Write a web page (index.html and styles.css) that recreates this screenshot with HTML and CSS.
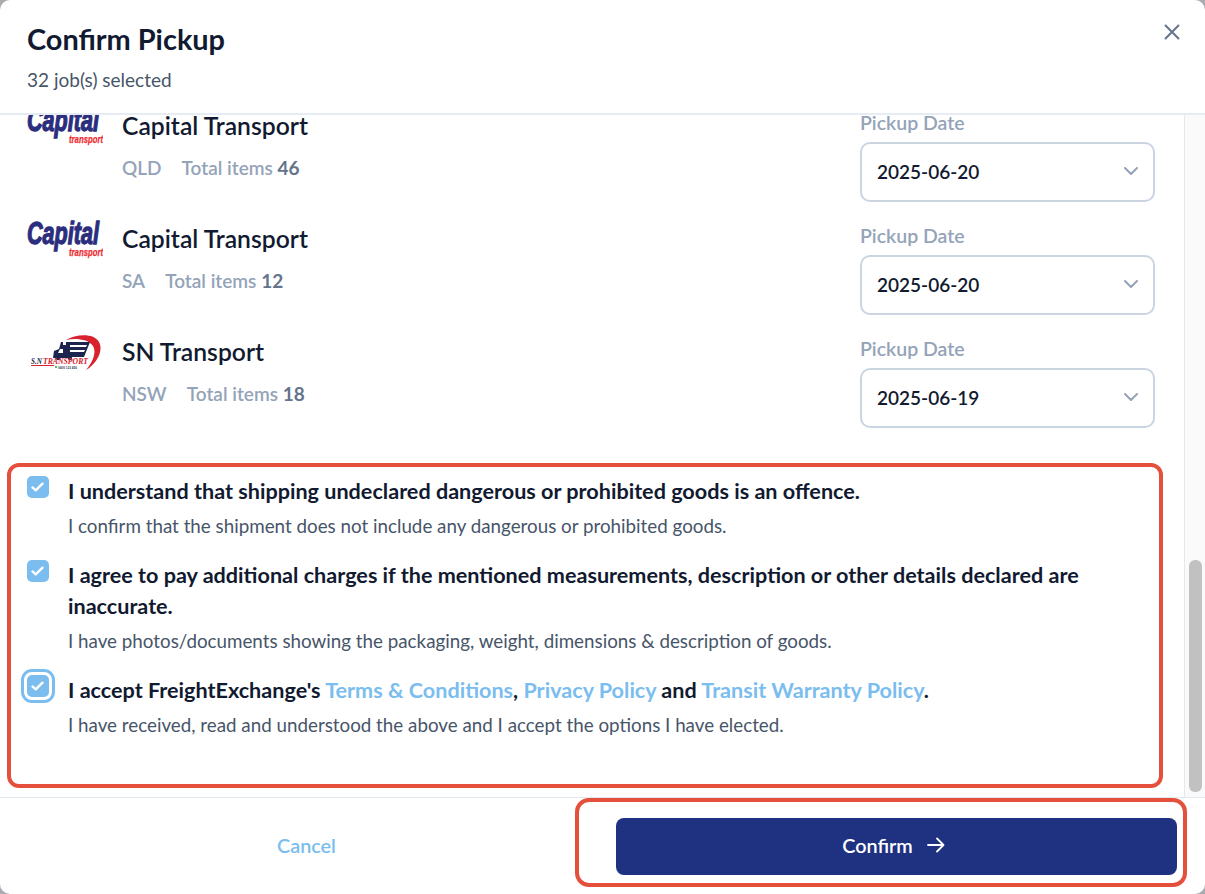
FILE: index.html
```html
<!DOCTYPE html>
<html lang="en">
<head>
<meta charset="utf-8">
<title>Confirm Pickup</title>
<link rel="stylesheet" href="styles.css">
</head>
<body>
<div class="dialog">
  <header class="head">
    <div>
      <h1 class="title">Confirm Pickup</h1>
      <p class="count">32 job(s) selected</p>
    </div>
    <svg class="close" width="16" height="16" viewBox="0 0 16 16" aria-label="Close"><path d="M1.5 1.5 14.5 14.5M14.5 1.5 1.5 14.5"/></svg>
  </header>

  <div class="middle">
    <div class="scroll">
      <div class="row">
        <svg class="logo" viewBox="0 0 77 40" aria-hidden="true">
          <text class="cap" x="1" y="24" textLength="72" lengthAdjust="spacingAndGlyphs">Capital</text>
          <text class="tra" x="43" y="36" textLength="34" lengthAdjust="spacingAndGlyphs">transport</text>
        </svg>
        <div class="info">
          <div class="name">Capital Transport</div>
          <div class="meta"><span>QLD</span><span>Total items <b>46</b></span></div>
        </div>
        <div class="pick">
          <div class="pick-label">Pickup Date</div>
          <div class="select"><span>2025-06-20</span><svg width="14" height="8" viewBox="0 0 14 8"><path d="M1 1l6 6 6-6"/></svg></div>
        </div>
      </div>
      <div class="row">
        <svg class="logo" viewBox="0 0 77 40" aria-hidden="true">
          <text class="cap" x="1" y="24" textLength="72" lengthAdjust="spacingAndGlyphs">Capital</text>
          <text class="tra" x="43" y="36" textLength="34" lengthAdjust="spacingAndGlyphs">transport</text>
        </svg>
        <div class="info">
          <div class="name">Capital Transport</div>
          <div class="meta"><span>SA</span><span>Total items <b>12</b></span></div>
        </div>
        <div class="pick">
          <div class="pick-label">Pickup Date</div>
          <div class="select"><span>2025-06-20</span><svg width="14" height="8" viewBox="0 0 14 8"><path d="M1 1l6 6 6-6"/></svg></div>
        </div>
      </div>
      <div class="row">
        <svg class="logo" viewBox="0 0 77 40" aria-hidden="true">
          <path class="sn-red" d="M40 7C50 1 68 0 73 9 78 18 70 31 60 37 66 30 71 20 67 13 62 6 50 5 40 7Z"/>
          <path class="sn-navy" d="M40 9H64L58 24H40Z"/>
          <path class="sn-white" d="M44 12H61L60 14H44ZM44 17H59L58 19H44Z"/>
          <path class="sn-navy" d="M27 25 28 18 33 16 35 9H37V12H42V25Z"/>
          <path class="sn-white" d="M32 20 34 16H37V20Z"/>
          <circle class="sn-navy" cx="32" cy="25" r="2.2"/>
          <circle class="sn-navy" cx="44" cy="25" r="2.2"/>
          <text class="sn-a" x="5" y="31" textLength="11" lengthAdjust="spacingAndGlyphs">S.N</text>
          <text class="sn-b" x="17" y="31" textLength="45" lengthAdjust="spacingAndGlyphs">TRANSPORT</text>
          <path class="sn-red" d="M5 32H28V33H5Z"/>
          <circle class="sn-green" cx="30" cy="34" r="1"/>
          <text class="sn-c" x="32" y="35.5" textLength="19" lengthAdjust="spacingAndGlyphs">0400 123 456</text>
        </svg>
        <div class="info">
          <div class="name">SN Transport</div>
          <div class="meta"><span>NSW</span><span>Total items <b>18</b></span></div>
        </div>
        <div class="pick">
          <div class="pick-label">Pickup Date</div>
          <div class="select"><span>2025-06-19</span><svg width="14" height="8" viewBox="0 0 14 8"><path d="M1 1l6 6 6-6"/></svg></div>
        </div>
      </div>

      <section class="terms">
        <div class="term">
          <span class="check"><svg width="13" height="10" viewBox="0 0 14 11"><path d="M1.5 6 5 9.2 12.5 1.8"/></svg></span>
          <div>
            <p class="term-head">I understand that shipping undeclared dangerous or prohibited goods is an offence.</p>
            <p class="term-sub">I confirm that the shipment does not include any dangerous or prohibited goods.</p>
          </div>
        </div>
        <div class="term">
          <span class="check"><svg width="13" height="10" viewBox="0 0 14 11"><path d="M1.5 6 5 9.2 12.5 1.8"/></svg></span>
          <div>
            <p class="term-head">I agree to pay additional charges if the mentioned measurements, description or other details declared are inaccurate.</p>
            <p class="term-sub">I have photos/documents showing the packaging, weight, dimensions &amp; description of goods.</p>
          </div>
        </div>
        <div class="term">
          <span class="check focus"><svg width="13" height="10" viewBox="0 0 14 11"><path d="M1.5 6 5 9.2 12.5 1.8"/></svg></span>
          <div>
            <p class="term-head">I accept FreightExchange's <a href="#">Terms &amp; Conditions</a>, <a href="#">Privacy Policy</a> and <a href="#">Transit Warranty Policy</a>.</p>
            <p class="term-sub">I have received, read and understood the above and I accept the options I have elected.</p>
          </div>
        </div>
      </section>
    </div>
    <div class="track"><div class="thumb"></div></div>
  </div>

  <footer class="foot">
    <button class="cancel" type="button">Cancel</button>
    <div class="confirm-wrap">
      <button class="confirm" type="button">Confirm
        <svg width="18" height="16" viewBox="0 0 18 16"><path d="M1 8H16.5M10 1.5 16.5 8 10 14.5"/></svg>
      </button>
    </div>
  </footer>
</div>
</body>
</html>
```
FILE: styles.css
```css
* { box-sizing: border-box; }
html, body { height: 100%; }
body {
  margin: 0;
  background: #a9abae;
  font-family: Lato, "Noto Sans", sans-serif;
  color: #0f172a;
}
p, h1 { margin: 0; }

.dialog {
  height: 894px;
  background: #fff;
  border-radius: 10px;
  display: flex;
  flex-direction: column;
  overflow: hidden;
}

.head {
  height: 115px;
  flex: none;
  padding: 21px 25px 0 27px;
  display: flex;
  justify-content: space-between;
  align-items: flex-start;
  border-bottom: 2px solid #e6ecf3;
}
.title { font-size: 28.9px; line-height: 36px; font-weight: 700; color: #111a30; }
.count { margin-top: 11px; font-size: 19px; line-height: 24px; color: #475569; }
.close { margin-top: 3px; fill: none; stroke: #64748b; stroke-width: 2; stroke-linecap: round; }

.middle { flex: 1; min-height: 0; display: flex; }
.scroll { flex: 1; min-width: 0; overflow: hidden; }
.track {
  flex: none;
  width: 21px;
  background: #fafafa;
  border-left: 1px solid #e8e8e8;
  padding: 445px 3px 0 4px;
}
.thumb { height: 232px; background: #c1c1c1; border-radius: 6px; }

.row {
  height: 113px;
  padding: 0 29px 0 26px;
  display: flex;
  align-items: flex-start;
}
.row:first-child { margin-top: -8px; }
.logo { width: 77px; height: 40px; flex: none; }
.cap {
  font-family: "Liberation Sans", sans-serif;
  font-weight: 700;
  font-style: italic;
  font-size: 32px;
  fill: #2b2d7d;
  stroke: #2b2d7d;
  stroke-width: 1.3;
}
.tra {
  font-family: "Liberation Sans", sans-serif;
  font-weight: 700;
  font-style: italic;
  font-size: 11px;
  fill: #ee2a30;
  stroke: #ee2a30;
  stroke-width: .25;
}
.sn-red { fill: #d8232e; }
.sn-navy { fill: #1b2550; }
.sn-white { fill: #fff; }
.sn-green { fill: #2f9e44; }
.sn-a, .sn-b {
  font-family: "Liberation Serif", serif;
  font-weight: 700;
  font-style: italic;
  font-size: 8px;
}
.sn-a { fill: #1b2550; }
.sn-b { fill: #d8232e; }
.sn-c { font-family: "Liberation Sans", sans-serif; font-weight: 700; font-size: 3px; fill: #334155; }

.info { margin-left: 19px; padding-top: 3px; flex: 1; }
.name { font-size: 24.7px; line-height: 32px; font-weight: 600; color: #111a30; }
.meta {
  margin-top: 14px;
  display: flex;
  gap: 20px;
  font-size: 19px;
  line-height: 24px;
  font-weight: 600;
  color: #94a3b8;
}
.meta b { font-weight: 700; color: #64748b; }

.pick { width: 295px; flex: none; padding-top: 3px; }
.pick-label { font-size: 19.5px; line-height: 26px; font-weight: 600; color: #94a3b8; }
.select {
  margin-top: 6px;
  height: 60px;
  padding: 0 15px 2px;
  border: 2px solid #cbd5e1;
  border-radius: 10px;
  display: flex;
  align-items: center;
  justify-content: space-between;
  font-size: 19px;
  font-weight: 600;
  color: #111a30;
}
.select svg { fill: none; stroke: #94a3b8; stroke-width: 2; stroke-linecap: round; stroke-linejoin: round; }

.terms {
  width: 1156px;
  height: 325px;
  margin: 17px 0 0 7px;
  padding: 9px 15px 0 15.7px;
  border: 4px solid #e5503c;
  border-radius: 12px;
}
.term { display: flex; gap: 19.3px; margin-bottom: 21px; }
.term > div { flex: 1; }
.check {
  flex: none;
  width: 22px;
  height: 22px;
  border-radius: 5px;
  background: #7abdee;
  display: flex;
  align-items: center;
  justify-content: center;
}
.check svg { fill: none; stroke: #fff; stroke-width: 2.6; stroke-linecap: round; stroke-linejoin: round; }
.check.focus { outline: 3px solid #7abdee; outline-offset: 3px; }
.term-head { font-size: 21.6px; line-height: 31px; font-weight: 700; color: #111a30; }
.term-head a { color: #7abdee; text-decoration: none; }
.term-sub { margin-top: 5px; font-size: 18.8px; line-height: 27px; color: #475569; }

.foot {
  height: 97px;
  flex: none;
  padding: 20px 28px 0 26px;
  display: grid;
  grid-template-columns: 561px 561px;
  gap: 29px;
  border-top: 1px solid #e2e8f0;
}
.cancel, .confirm {
  height: 57px;
  border: 0;
  font: 600 19.8px Lato, sans-serif;
}
.cancel { background: none; color: #7abdee; padding: 0 0 3px; }
.confirm-wrap { position: relative; height: 57px; }
.confirm-wrap::after {
  content: "";
  position: absolute;
  inset: -20px -10px -12px -41px;
  border: 4px solid #e5503c;
  border-radius: 14px;
  pointer-events: none;
}
.confirm {
  width: 100%;
  padding: 0 6px 3px 0;
  background: #1f3181;
  color: #fff;
  border-radius: 8px;
  display: flex;
  align-items: center;
  justify-content: center;
  gap: 14px;
}
.confirm svg { fill: none; stroke: #fff; stroke-width: 1.8; stroke-linecap: round; stroke-linejoin: round; }
```
